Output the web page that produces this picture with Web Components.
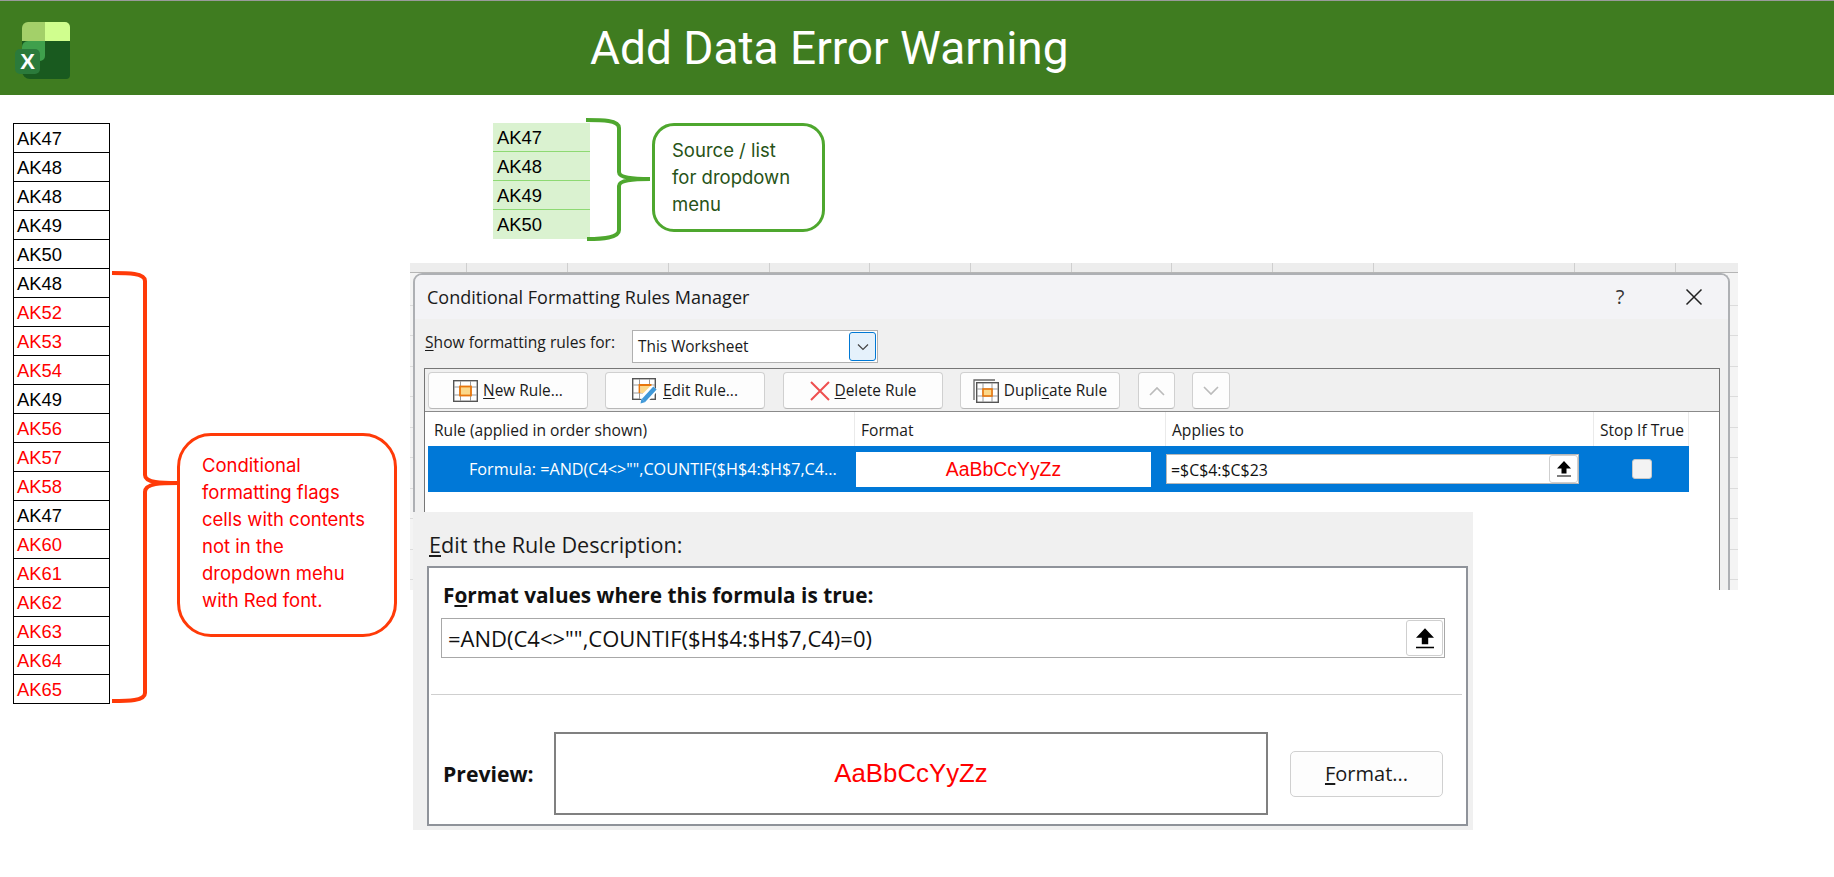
<!DOCTYPE html>
<html>
<head>
<meta charset="utf-8">
<title>Add Data Error Warning</title>
<style>
  html, body { margin: 0; padding: 0; background: #fff; }
  body { width: 1834px; height: 877px; overflow: hidden; font-family: "Liberation Sans", sans-serif; }
  #main { display: flex; height: 782px; }
  #left { display: flex; align-items: flex-start; width: 410px; padding: 28px 0 0 13px; box-sizing: border-box; }
  #right { flex: 1; display: flex; flex-direction: column; }
  #source-row { display: flex; align-items: flex-start; height: 168px; padding: 23px 0 0 83px; box-sizing: border-box; }
</style>
</head>
<body>
<template id="cell-list-tpl">
  <style>
    :host { display: block; width: 97px; box-sizing: border-box; font: 18.4px/29px "Liberation Sans", sans-serif; color: #000; }
    :host([variant="outlined"]) { border: 1px solid #000; border-bottom: 0; }
    :host([variant="source"]) { background: #daf2d0; margin-top: 0; }
    ::slotted(div) { height: 29px; box-sizing: border-box; padding-left: 3px; line-height: 29px; }
    :host([variant="outlined"]) ::slotted(div) { border-bottom: 1px solid #000; }
    :host([variant="source"]) ::slotted(div) { border-bottom: 1px solid #8ed973; padding-left: 4px; }
    :host([variant="source"]) ::slotted(div:last-child) { border-bottom: 0; }
  </style>
  <slot></slot>
</template>

<template id="call-out-tpl">
  <style>
    :host { display: block; box-sizing: border-box; background: #fff; border: 3px solid var(--line); color: var(--ink); font: 18.5px/27px "Inter", sans-serif; }
  </style>
  <slot></slot>
</template>

<template id="title-banner-tpl">
  <style>
    :host { display: flex; align-items: center; height: 95px; box-sizing: border-box; background: #3f7c20; border-top: 1px solid #9a9a9a; }
    .logo { margin: 2px 0 0 14px; flex: none; }
    h1 { margin: 0 0 0 519px; font: 400 46px/1 "Roboto", sans-serif; color: #fff; white-space: nowrap; }
  </style>
  <svg class="logo" width="57" height="60" viewBox="0 0 57 60">
    <path d="M8 40V9a6 6 0 0 1 6-6h18v30z" fill="#a3d069"/>
    <path d="M31 3h20a5 5 0 0 1 5 5v14H31z" fill="#d0fe8e"/>
    <path d="M8 22h48v34a4 4 0 0 1-4 4H16a8 8 0 0 1-8-8z" fill="#195a1f"/>
    <path d="M8 44V28a6 6 0 0 1 6-6h17v15a5 5 0 0 1-5 5v2z" fill="#3fa04c"/>
    <rect x="1" y="30" width="25" height="25" rx="5" fill="#2b7a3b"/>
    <text x="13.5" y="50" text-anchor="middle" font-family="Liberation Sans" font-weight="700" font-size="22" fill="#fff">X</text>
  </svg>
  <h1><slot></slot></h1>
</template>

<template id="sheet-backdrop-tpl">
  <style>
    :host { display: block; position: relative; width: 1328px; height: 327px; box-sizing: border-box; padding: 10px 8px 0 3px;
      background-color: #f4f4f4;
      background-image: repeating-linear-gradient(to bottom, transparent 0 29.5px, #dcdcdc 29.5px 30.5px);
      background-position: 0 12px;
    }
    .colhead { position: absolute; left: 0; right: 0; top: 0; height: 9px; border-bottom: 1px solid #b5b5b5; background: repeating-linear-gradient(to right, #ededed 0 56.500px, #cfcfcf 56.500px 57.500px, #ededed 57.500px 100.700px); }
  </style>
  <div class="colhead"></div>
  <slot></slot>
</template>

<template id="rule-dialog-tpl">
  <style>
    :host { display: block; position: relative; height: 317px; box-sizing: border-box; background: #f0f0f0; border: 2px solid #aeb0b4; border-bottom: 0; border-radius: 9px 9px 0 0; font: 15.6px/20px "Open Sans", sans-serif; color: #1a1a1a; overflow: hidden; }
    .title { height: 44px; display: flex; align-items: center; padding-left: 12px; background: #f3f3f6; font-size: 18px; }
    .title span:first-child { flex: 1; }
    .help { width: 16px; text-align: center; margin-right: 57px; font-size: 20px; color: #333; }
    .close { margin-right: 25px; }
    .show { display: flex; align-items: flex-start; height: 49px; padding: 11px 0 0 10px; box-sizing: border-box; }
    .show label { width: 207px; margin-top: 2px; }
    u { text-underline-offset: 2px; }
    .combo { width: 246px; height: 33px; box-sizing: border-box; background: #fff; border: 1px solid #b0b0b0; display: flex; align-items: center; justify-content: space-between; padding: 1px; }
    .combo span { padding-left: 4px; font-size: 15.4px; }
    .combo i { width: 27px; height: 29px; box-sizing: border-box; background: #e5f1fb; border: 1px solid #0078d4; border-radius: 3px; display: flex; align-items: center; justify-content: center; }
    .panel { margin: 0 8px 0 9px; height: 223px; border: 1px solid #767676; border-bottom: 0; }
    .tools { display: flex; height: 43px; box-sizing: border-box; padding-top: 3px; border-bottom: 1px solid #8a8a8a; }
    .list { background: #fff; height: 180px; padding: 0 0 0 3px; }
    .heads { display: flex; height: 34px; align-items: center; }
    .heads div { box-sizing: border-box; padding-left: 6px; height: 34px; line-height: 36px; border-right: 1px solid #eaeaea; white-space: nowrap; }
    .row { display: flex; height: 46px; width: 1261px; background: #0078d7; align-items: center; position: relative; }
    .rule-text { width: 427px; padding-left: 41px; box-sizing: border-box; color: #fff; white-space: nowrap; font-size: 16.2px; }
    .format { width: 295px; height: 35px; background: #fff; color: #f00; font: 19.4px/35px "Liberation Sans", sans-serif; text-align: center; margin-left: 1px; margin-top: 1px; }
    .applies { margin-left: 15px; width: 413px; height: 30px; box-sizing: border-box; background: #fff; border: 1px solid #b8b8b8; display: flex; align-items: center; justify-content: space-between; padding-left: 4px; color: #111; font-size: 15.9px; }
    .applies span { padding-top: 2px; }
    .check { margin-left: 53px; width: 20px; height: 20px; box-sizing: border-box; background: #f3f3f3; border: 1px solid #c8c8c8; border-radius: 3px; }
  </style>
  <div class="title"><span>Conditional Formatting Rules Manager</span><span class="help">?</span>
    <svg class="close" width="18" height="18" viewBox="0 0 18 18"><path d="M1.5 1.5l15 15M16.5 1.5l-15 15" stroke="#222" stroke-width="1.5" fill="none"/></svg>
  </div>
  <div class="show">
    <label><u>S</u>how formatting rules for:</label>
    <div class="combo"><span>This Worksheet</span><i><svg width="14" height="8" viewBox="0 0 14 8"><path d="M2 1.500l5 5 5-5" stroke="#444" stroke-width="1.200" fill="none"/></svg></i></div>
  </div>
  <div class="panel">
    <div class="tools">
      <tool-button style="margin-left:3px;width:160px"><svg slot="icon" width="25" height="22" viewBox="0 0 25 22"><rect x=".7" y=".7" width="23.600" height="20.600" fill="#fff" stroke="#555" stroke-width="1.400"/><path d="M1 7h23M1 15h23M7.500 1v20M17.500 1v20" stroke="#999" stroke-width="1" fill="none"/><rect x="7" y="6.500" width="11" height="9" fill="#fbd88a" stroke="#e8760c" stroke-width="1.800"/></svg><span><u>N</u>ew Rule...</span></tool-button>
      <tool-button style="margin-left:17px;width:160px"><svg slot="icon" width="26" height="26" viewBox="0 0 26 26"><rect x=".7" y=".7" width="22.600" height="20.600" fill="#fff" stroke="#555" stroke-width="1.400"/><path d="M1 7h22M1 15h10M7.500 1v20M17.500 1v6" stroke="#999" stroke-width="1" fill="none"/><path d="M7.500 15V7h12" stroke="#e8760c" stroke-width="1.800" fill="none"/><path d="M8.500 8h10l-7 7H8.500z" fill="#fbd88a"/><path d="M11 23L23 10" stroke="#fff" stroke-width="8" fill="none"/><path d="M11.500 22.500L23 10" stroke="#3f98d8" stroke-width="4.500" fill="none"/><path d="M8.500 25.500l1-5 4 3.500z" fill="#3f98d8"/></svg><span><u>E</u>dit Rule...</span></tool-button>
      <tool-button style="margin-left:18px;width:160px"><svg slot="icon" width="20" height="20" viewBox="0 0 20 20"><path d="M1 1l18 18M19 1L1 19" stroke="#ee4f4f" stroke-width="2" fill="none"/></svg><span><u>D</u>elete Rule</span></tool-button>
      <tool-button style="margin-left:17px;width:160px"><svg slot="icon" width="26" height="24" viewBox="0 0 26 24"><path d="M1 21V1h21" stroke="#666" stroke-width="1.300" fill="none"/><rect x="3.700" y="3.700" width="21.600" height="19.600" fill="#fff" stroke="#555" stroke-width="1.400"/><path d="M4 10h21M4 17h21M10 4v19M19 4v19" stroke="#999" stroke-width="1" fill="none"/><rect x="10" y="10" width="9" height="7" fill="#fbd88a" stroke="#e8760c" stroke-width="1.600"/></svg><span>Dupli<u>c</u>ate Rule</span></tool-button>
      <tool-button style="margin-left:18px;width:37px"><svg width="16" height="10" viewBox="0 0 16 10"><path d="M1 9l7-7 7 7" stroke="#bbb" stroke-width="1.600" fill="none"/></svg></tool-button>
      <tool-button style="margin-left:17px;width:38px"><svg width="16" height="10" viewBox="0 0 16 10"><path d="M1 1l7 7 7-7" stroke="#bbb" stroke-width="1.600" fill="none"/></svg></tool-button>
    </div>
    <div class="list">
      <div class="heads">
        <div style="width:427px">Rule (applied in order shown)</div>
        <div style="width:311px">Format</div>
        <div style="width:428px">Applies to</div>
        <div style="width:95px">Stop If True</div>
      </div>
      <div class="row">
        <div class="rule-text">Formula: =AND(C4&lt;&gt;"",COUNTIF($H$4:$H$7,C4...</div>
        <div class="format">AaBbCcYyZz</div>
        <div class="applies"><span>=$C$4:$C$23</span><pick-button small></pick-button></div>
        <div class="check"></div>
      </div>
    </div>
  </div>
</template>

<template id="tool-button-tpl">
  <style>
    :host { display: flex; align-items: center; justify-content: center; gap: 5px; height: 37px; box-sizing: border-box; background: #fdfdfd; border: 1px solid #d0d0d0; border-bottom-color: #b8b8b8; border-radius: 4px; white-space: nowrap; font-size: 15.4px; flex: none; }
    ::slotted(span) { padding-top: 1px; }
  </style>
  <slot name="icon"></slot><slot></slot>
</template>

<template id="pick-button-tpl">
  <style>
    :host { display: flex; align-items: center; justify-content: center; width: 29px; height: 28px; box-sizing: border-box; background: #fff; border: 1px solid #cfcfcf; border-radius: 3px; flex: none; }
    :host([large]) { width: 37px; height: 36px; }
    :host([large]) svg { width: 18px; height: 21px; }
  </style>
  <svg width="14" height="16" viewBox="0 0 14 16"><path d="M7 0L14 7.500H9.500V12.500H4.500V7.500H0z" fill="#000"/><path d="M0 15h14" stroke="#000" stroke-width="1.200"/></svg>
</template>

<template id="rule-description-tpl">
  <style>
    :host { display: block; position: absolute; left: 3px; top: 249px; width: 1060px; height: 318px; box-sizing: border-box; padding: 0 5px 4px 14px; background: #f0f0f0; font: 15.4px/20px "Open Sans", sans-serif; color: #1a1a1a; }
    .heading { height: 54px; box-sizing: border-box; padding-top: 21px; font-size: 21.6px; margin-left: 2px; line-height: 24px; }
    u { text-underline-offset: 2px; }
    .box { height: 260px; box-sizing: border-box; background: #fff; border: 2px solid #8f939a; padding: 0 2px 0 14px; }
    .strong { font-weight: 700; font-size: 20.8px; color: #111; line-height: 24px; white-space: nowrap; }
    .box > .strong { height: 50px; box-sizing: border-box; padding-top: 15px; }
    .input { width: 1004px; margin-left: -2px; height: 40px; box-sizing: border-box; border: 1px solid #a8a8a8; display: flex; align-items: center; justify-content: space-between; padding: 0 1px 0 6px; font-size: 22px; color: #111; }
    hr { margin: 36px 2px 0 -12px; border: 0; border-top: 1px solid #cfcfcf; }
    .preview { display: flex; align-items: center; margin-top: 37px; }
    .preview .strong { width: 111px; font-size: 21.200px; }
    .sample { width: 714px; height: 83px; box-sizing: border-box; border: 2px solid #808080; color: #f00; font: 25.800px/79px "Liberation Sans", sans-serif; text-align: center; }
    .format { margin-left: 22px; width: 153px; height: 46px; box-sizing: border-box; background: #fdfdfd; border: 1px solid #d0d0d0; border-radius: 5px; text-align: center; line-height: 44px; font-size: 20px; }
  </style>
  <div class="heading"><u>E</u>dit the Rule Description:</div>
  <div class="box">
    <div class="strong">F<u>o</u>rmat values where this formula is true:</div>
    <div class="input"><span>=AND(C4&lt;&gt;"",COUNTIF($H$4:$H$7,C4)=0)</span><pick-button large></pick-button></div>
    <hr>
    <div class="preview">
      <div class="strong">Preview:</div>
      <div class="sample">AaBbCcYyZz</div>
      <div class="format"><u>F</u>ormat...</div>
    </div>
  </div>
</template>

<title-banner>Add Data Error Warning</title-banner>
<div id="main">
  <div id="left">
    <cell-list variant="outlined">
      <div>AK47</div><div>AK48</div><div>AK48</div><div>AK49</div><div>AK50</div><div>AK48</div>
      <div style="color:#f00">AK52</div><div style="color:#f00">AK53</div><div style="color:#f00">AK54</div>
      <div>AK49</div>
      <div style="color:#f00">AK56</div><div style="color:#f00">AK57</div><div style="color:#f00">AK58</div>
      <div>AK47</div>
      <div style="color:#f00">AK60</div><div style="color:#f00">AK61</div><div style="color:#f00">AK62</div><div style="color:#f00">AK63</div><div style="color:#f00">AK64</div><div style="color:#f00">AK65</div>
    </cell-list>
    <svg width="66" height="434" viewBox="0 0 66 434" style="flex:none;margin:147px 0 0 2px" fill="none">
      <path d="M0 3C16 3 33 3 33 11V205C33 213 50 213 66 213C50 213 33 213 33 222V423C33 431 16 431 0 431" stroke="#ff3a08" stroke-width="4"/>
    </svg>
    <call-out style="--line:#ff3a08;--ink:#f00;width:220px;height:204px;border-radius:34px;padding:16px 0 0 22px;margin:310px 0 0 -1px;flex:none">Conditional<br>formatting flags<br>cells with contents<br>not in the<br>dropdown mehu<br>with Red font.</call-out>
  </div>
  <div id="right">
    <div id="source-row">
      <cell-list variant="source" style="margin-top:5px;flex:none"><div>AK47</div><div>AK48</div><div>AK49</div><div>AK50</div></cell-list>
      <svg width="64" height="123" viewBox="0 0 64 123" style="flex:none;margin-left:-4px" fill="none">
        <path d="M0 2C16 2 33 2 33 10V54C33 60 48 61 64 61C48 61 33 62 33 68V112C33 120 16 121 1 121" stroke="#4ea72e" stroke-width="4"/>
      </svg>
      <call-out style="--line:#4ea72e;--ink:#275317;width:173px;height:109px;border-radius:22px;padding:11px 0 0 17px;margin:5px 0 0 2px;flex:none">Source / list<br>for dropdown<br>menu</call-out>
    </div>
    <sheet-backdrop>
      <rule-dialog></rule-dialog>
      <rule-description></rule-description>
    </sheet-backdrop>
  </div>
</div>
<script>
  // every element clones its own template into an open shadow root
  function register(name) {
    customElements.define(name, class extends HTMLElement {
      constructor() {
        super();
        this.attachShadow({ mode: 'open' });
        this.shadowRoot.appendChild(document.getElementById(name + '-tpl').content.cloneNode(true));
      }
    });
  }
  ['cell-list', 'call-out', 'title-banner', 'sheet-backdrop', 'rule-dialog', 'tool-button', 'pick-button', 'rule-description'].forEach(register);
</script>
</body>
</html>
